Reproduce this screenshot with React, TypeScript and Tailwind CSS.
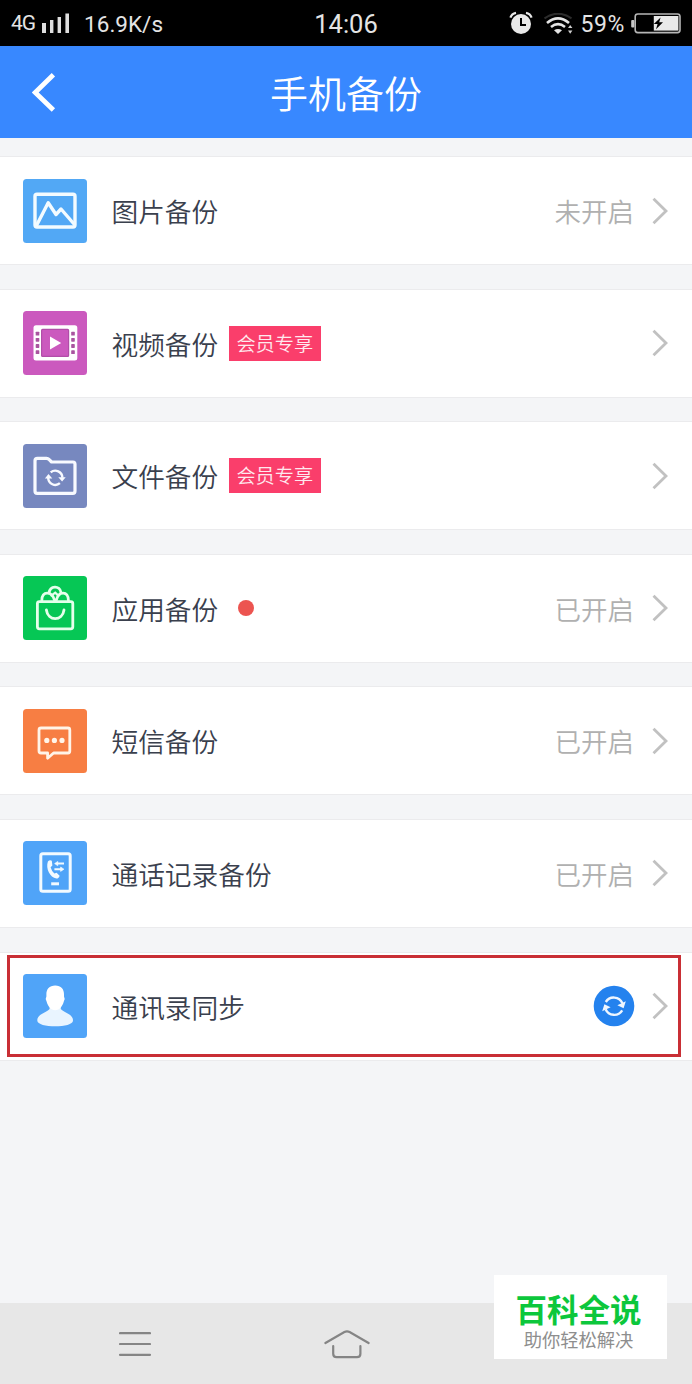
import React from 'react';

type RowProps = {
  icon: React.ReactNode;
  color: string;
  title: string;
  status?: string;
  vip?: boolean;
  dot?: boolean;
  sync?: boolean;
  highlighted?: boolean;
};

function PictureIcon() {
  return (
    <g fill="none" stroke="#f3fbff" strokeWidth="3.4" strokeLinejoin="round" strokeLinecap="round">
      <rect x="12" y="15.2" width="40" height="32.8" rx="2" />
      <path d="M13.5 46.5L25.2 23.7L33 35.5L38 30L51 45" />
    </g>
  );
}

function VideoIcon() {
  return (
    <g>
      <rect x="10.5" y="14.2" width="43.8" height="35.4" rx="2.5" fill="#fff" />
      <rect x="18.6" y="18.4" width="27" height="27" rx="1" fill="#cb59be" stroke="#b14ea8" strokeWidth="1.2" />
      <path d="M27 25.6V38.6L38.2 32.1Z" fill="#fff" />
      {[20.7, 26.9, 33.1, 39.3].map((y) => (
        <g key={y} fill="#a9549f">
          <rect x="12.7" y={y} width="3.6" height="3.8" rx="0.6" />
          <rect x="48.2" y={y} width="3.6" height="3.8" rx="0.6" />
        </g>
      ))}
    </g>
  );
}

// Two arc arrows chasing each other, centred on 0,0
function SyncArrows() {
  return (
    <g>
      <path
        d="M-8.2 -4.2A9.4 9.4 0 0 1 8.4 -3M8.2 4.2A9.4 9.4 0 0 1 -8.4 3"
        fill="none"
        stroke="#eef6ff"
        strokeWidth="2.4"
      />
      <path d="M3.4 -1L11.8 -5L9.6 2ZM-3.4 1L-11.8 5L-9.6 -2Z" fill="#eef6ff" />
    </g>
  );
}

function FolderIcon() {
  return (
    <g>
      <path
        d="M14.5 14.3H23.5Q25 14.3 26 15.4L28.6 18H50Q52 18 52 20.2V47Q52 49.3 49.8 49.3H14.2Q12 49.3 12 47V16.8Q12 14.3 14.5 14.3Z"
        fill="none"
        stroke="#f8faff"
        strokeWidth="3.2"
        strokeLinejoin="round"
      />
      <g transform="translate(32.3 33.8)">
        <path d="M-4.6 -5.4A7.1 7.1 0 0 1 7.1 0M4.6 5.4A7.1 7.1 0 0 1 -7.1 0" fill="none" stroke="#f8faff" strokeWidth="2.4" />
        <path d="M3 -0.6H10.4L6.8 3.8ZM-3 0.6H-10.4L-6.8 -3.8Z" fill="#f8faff" />
      </g>
    </g>
  );
}

function AppIcon() {
  return (
    <g fill="none" stroke="#e6ffeb" strokeWidth="2.8" strokeLinecap="round">
      <rect x="14.4" y="25.6" width="35.4" height="27.2" rx="2" />
      <path d="M18.8 24.5C18.6 14.5 29 14.8 31.4 24M45.4 24.5C45.4 14.5 35.6 14.8 33.4 24" />
      <path d="M26 17C27 9.2 36.8 9.2 38 16.4" />
      <path d="M28.4 19.6L32.2 16.6L35.4 19.6" strokeWidth="2.2" />
      <path d="M23.4 34C25 45.6 39.4 45.6 41 34" />
    </g>
  );
}

function MessageIcon() {
  return (
    <g>
      <path
        d="M18 19H45Q46.8 19 46.8 21V42Q46.8 44 45 44H30.6L24.6 49.2V44H18Q16 44 16 42V21Q16 19 18 19Z"
        fill="none"
        stroke="#fff4e8"
        strokeWidth="2.8"
        strokeLinejoin="round"
      />
      <g fill="#fff4e8">
        <circle cx="23.8" cy="31.4" r="2.6" />
        <circle cx="31.4" cy="31.4" r="2.6" />
        <circle cx="39" cy="31.4" r="2.6" />
      </g>
    </g>
  );
}

function CallLogIcon() {
  return (
    <g>
      <rect x="17.8" y="12.7" width="29.4" height="37.6" rx="2" fill="none" stroke="#f2faff" strokeWidth="3" />
      <path
        d="M24.9 20.4Q26.8 18.6 28.8 19.8L29.4 24.4L27.6 26.2Q28.6 30 31.4 32.6L33.6 31.8L36.6 34.8Q36 37.6 33.4 37.6C27 36.2 22.4 27.6 24.9 20.4Z"
        fill="#f2faff"
      />
      <g fill="#f2faff" stroke="#f2faff" strokeWidth="2">
        <path d="M34 22.6H41M31.4 28.2H38" />
        <path d="M34.8 20.4V24.8L31.6 22.6ZM37.6 26V30.4L41 28.2Z" strokeWidth="0.6" />
      </g>
      <path d="M28.2 42.8H36" stroke="#f2faff" strokeWidth="3" />
    </g>
  );
}

function ContactIcon() {
  return (
    <g>
      <path
        d="M26.6 31V35C24 38.6 14.3 39.6 14.3 46.4C14.3 50.4 23 52.2 32.2 52.2S50 50.4 50 46.4C50 39.6 40.4 38.6 37.8 35V31Z"
        fill="#e9f5ff"
      />
      <path
        d="M32.2 11.4C38 11.4 41.2 15 41 20.6V22.6Q42.4 24.6 40.8 27.6C39.6 32.4 36.6 36.2 32.2 36.2S24.8 32.4 23.6 27.6Q22 24.6 23.4 22.6V20.6C23.2 15 26.4 11.4 32.2 11.4Z"
        fill="#fff"
      />
    </g>
  );
}

const rows: RowProps[] = [
  { icon: <PictureIcon />, color: '#52a8f5', title: '图片备份', status: '未开启' },
  { icon: <VideoIcon />, color: '#cb59be', title: '视频备份', vip: true },
  { icon: <FolderIcon />, color: '#7788bf', title: '文件备份', vip: true },
  { icon: <AppIcon />, color: '#06c755', title: '应用备份', status: '已开启', dot: true },
  { icon: <MessageIcon />, color: '#f77e43', title: '短信备份', status: '已开启' },
  { icon: <CallLogIcon />, color: '#50a4f8', title: '通话记录备份', status: '已开启' },
  { icon: <ContactIcon />, color: '#50a4f8', title: '通讯录同步', sync: true, highlighted: true },
];

function BackupRow({ icon, color, title, status, vip, dot, sync, highlighted }: RowProps) {
  return (
    <div className="relative flex h-[109px] items-center border-y border-[#ebebed] bg-white pr-6 pl-[23px]">
      <svg viewBox="0 0 64 64" className="h-16 w-16 shrink-0">
        <rect width="64" height="64" rx="3.5" fill={color} />
        {icon}
      </svg>
      <span className="ml-[24.5px] pt-px text-[26.7px] leading-10 font-[350] text-[#3a404d]">{title}</span>
      {vip && (
        <span className="ml-[10.5px] flex h-[35px] w-[92px] items-center justify-center bg-[#fa3e6b] text-[19.2px] font-[350] text-[#ffe9ee]">
          会员专享
        </span>
      )}
      {dot && <span className="ml-5 h-4 w-4 rounded-full bg-[#ec5450]" />}
      <div className="ml-auto flex items-center">
        {status && <span className="mr-[18px] pt-px text-[26.5px] leading-10 font-[350] text-[#b0b0b0]">{status}</span>}
        {sync && (
          <svg viewBox="0 0 42 42" className="mr-[17px] h-[42px] w-[42px]">
            <circle cx="21" cy="21" r="20.3" fill="#2482ee" />
            <g transform="translate(21 21.2)">
              <SyncArrows />
            </g>
          </svg>
        )}
        <svg viewBox="0 0 16 28" className="h-7 w-4" fill="none" stroke="#c1c1c1" strokeWidth="2.8">
          <path d="M1.5 1.8L14 14L1.5 26.2" />
        </svg>
      </div>
      {highlighted && <div className="absolute top-[2px] left-[7px] h-[102px] w-[674px] border-[3px] border-[#c92f35]" />}
    </div>
  );
}

function StatusBar() {
  return (
    <div className="grid h-[46px] grid-cols-[1fr_auto_1fr] items-center bg-black font-['Roboto','Liberation_Sans',sans-serif] text-[#e4e4e4]">
      <div className="flex items-center pl-[11px]">
        <span className="pt-px text-[21px] tracking-[-1px]">4G</span>
        <svg viewBox="0 0 28 20" className="ml-[7px] h-5 w-7" fill="#dedede">
          <rect x="0" y="10" width="4" height="10" />
          <rect x="8" y="7" width="3.4" height="13" />
          <rect x="15.6" y="4" width="3.4" height="16" />
          <rect x="23.4" y="0.5" width="3.6" height="19.5" />
        </svg>
        <span className="ml-[14px] pt-[3px] text-[22.5px]">16.9K/s</span>
      </div>
      <span className="pt-[3px] text-[25.5px]">14:06</span>
      <div className="flex items-center justify-end pr-[11px]">
        <svg viewBox="0 0 24 24" className="mr-[11px] h-6 w-6">
          <circle cx="12" cy="13" r="10" fill="#e8e8e8" />
          <path d="M1.4 6.6Q2.8 2.6 7 1.8M22.6 6.6Q21.2 2.6 17 1.8" fill="none" stroke="#e8e8e8" strokeWidth="2.2" />
          <path d="M12 7V14H17" fill="none" stroke="#000" strokeWidth="2" />
        </svg>
        <svg viewBox="0 0 30 22" className="mt-[2px] mr-[7px] h-[22px] w-[30px]" fill="none" stroke="#e4e4e4">
          <path d="M0.5 5.4Q14 -4 27.5 5.4" stroke="#2c2c2c" strokeWidth="2" />
          <path d="M3 10Q14 0.6 25 10" strokeWidth="2.6" />
          <path d="M7 14Q14 8.4 21 14" strokeWidth="2.6" />
          <path d="M10 17.2Q14 14.6 18 17.2L14 21Z" fill="#e4e4e4" stroke="none" />
          <path d="M24 15L26.2 12L28.4 15ZM24 17.6L26.2 20.8L28.4 17.6Z" fill="#cfcfcf" stroke="none" />
        </svg>
        <span className="mr-[6px] pt-[4px] text-[23px] tracking-[0.6px]">59%</span>
        <svg viewBox="0 0 50 21" className="h-[21px] w-[50px]">
          <rect x="0.2" y="7" width="3.2" height="7.4" rx="1" fill="#c8c8c8" />
          <rect x="4.2" y="1" width="44.8" height="18.6" rx="2.6" fill="none" stroke="#b6b6b6" strokeWidth="1.6" />
          <rect x="22.8" y="3" width="24.6" height="14.6" fill="#e9e9e9" />
          <path d="M29.6 4.4L22.8 11H26.6L25 16.2L32 9.2H28.2Z" fill="#000" />
        </svg>
      </div>
    </div>
  );
}

export default function App() {
  return (
    <div className="relative flex h-[1384px] w-[692px] flex-col overflow-hidden bg-[#f4f5f7] font-['Noto_Sans_CJK_SC',sans-serif]">
      <StatusBar />
      <header className="grid h-[92px] shrink-0 grid-cols-[1fr_auto_1fr] items-center bg-[#3888ff] text-white">
        <svg viewBox="0 0 24 40" className="ml-8 h-10 w-6" fill="none" stroke="#fff" strokeWidth="4.8">
          <path d="M21.4 2.8L3.2 20.4L21.4 38" />
        </svg>
        <h1 className="text-[38px] leading-[56px] font-[350]">手机备份</h1>
      </header>

      <main className="flex flex-col gap-[23.6px] pt-[18px]">
        {rows.map((row) => (
          <BackupRow key={row.title} {...row} />
        ))}
      </main>

      <nav className="mt-auto flex h-[81px] shrink-0 items-center bg-[#e7e7e7] pl-[119px]">
        <svg viewBox="0 0 32 26" className="h-[26px] w-8" stroke="#858585" strokeWidth="2.2" strokeLinecap="round">
          <path d="M1 2.2H31M1 13H31M1 23.8H31" />
        </svg>
        <svg
          viewBox="0 0 46 30"
          className="ml-[173px] h-[30px] w-[46px]"
          fill="none"
          stroke="#858585"
          strokeWidth="2.2"
          strokeLinecap="round"
        >
          <path d="M1.4 14L20.4 3Q23 1.8 25.6 3L44.6 14" />
          <path d="M9.2 17V24.8Q9.2 28.2 12.6 28.2H33Q36.4 28.2 36.4 24.8V17" />
        </svg>
      </nav>

      {/* Floating brand badge */}
      <div className="absolute top-[1275px] left-[494px] flex h-[84px] w-[173px] flex-col items-center bg-white pt-[15px] pr-[4px]">
        <span className="text-[31.5px] leading-[36px] font-bold text-[#0cc73c]">百科全说</span>
        <span className="pt-px text-[18.3px] leading-[24px] text-[#8e8e8e]">助你轻松解决</span>
      </div>
    </div>
  );
}
